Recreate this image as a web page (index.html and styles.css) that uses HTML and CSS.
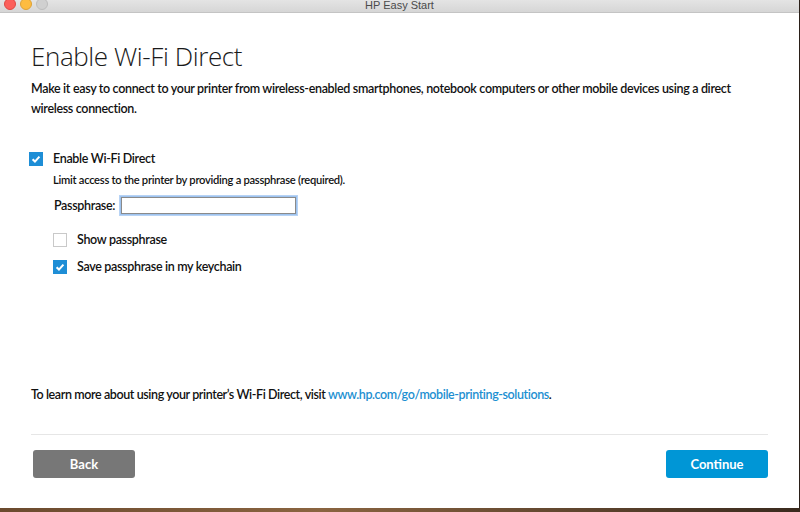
FILE: index.html
```html
<!DOCTYPE html>
<html>
<head>
<meta charset="utf-8">
<link rel="stylesheet" href="styles.css">
</head>
<body>
<div class="window">
  <div class="titlebar">
    <div class="lights">
      <span class="light red"></span>
      <span class="light yellow"></span>
      <span class="light gray"></span>
    </div>
    <div class="title">HP Easy Start</div>
  </div>
  <div class="content">
    <h1 class="heading">Enable Wi-Fi Direct</h1>
    <p class="intro">Make it easy to connect to your printer from wireless-enabled smartphones, notebook computers or other mobile devices using a direct wireless connection.</p>

    <div class="row main-check">
      <span class="box checked"><svg viewBox="0 0 14 14"><path d="M3 7.2 L5.8 10 L11 4.2" fill="none" stroke="#fff" stroke-width="2.4"/></svg></span>
      <span class="label">Enable Wi-Fi Direct</span>
    </div>
    <div class="sub">
      <div class="hint">Limit access to the printer by providing a passphrase (required).</div>
      <div class="pass-row">
        <span class="label">Passphrase:</span>
        <span class="input"></span>
      </div>
      <div class="row opt">
        <span class="box"></span>
        <span class="label">Show passphrase</span>
      </div>
      <div class="row opt">
        <span class="box checked"><svg viewBox="0 0 14 14"><path d="M3 7.2 L5.8 10 L11 4.2" fill="none" stroke="#fff" stroke-width="2.4"/></svg></span>
        <span class="label">Save passphrase in my keychain</span>
      </div>
    </div>

    <div class="spacer"></div>
    <p class="more">To learn more about using your printer’s Wi-Fi Direct, visit <a class="link">www.hp.com/go/mobile-printing-solutions</a>.</p>
    <div class="footer">
      <button class="btn back">Back</button>
      <button class="btn continue">Continue</button>
    </div>
  </div>
</div>
<div class="desk"></div>
</body>
</html>
```
FILE: styles.css
```css
html, body {
  margin: 0;
  padding: 0;
  width: 800px;
  height: 512px;
  overflow: hidden;
  background: #2a1f18;
  font-family: "Lato", "Liberation Sans", sans-serif;
}
.window {
  width: 799px;
  height: 508px;
  background: #fff;
  display: flex;
  flex-direction: column;
}
.desk {
  height: 4px;
  background: linear-gradient(90deg, #6b4a2e, #8a6440 40%, #3a2a1e);
}
.titlebar {
  height: 12px;
  position: relative;
  background: linear-gradient(#e4e4e4, #d6d6d6);
  border-bottom: 1px solid #c4c4c4;
  flex: none;
  overflow: hidden;
}
.lights {
  position: absolute;
  left: 4px;
  top: -2px;
  display: flex;
  gap: 4px;
}
.light {
  width: 12px;
  height: 12px;
  border-radius: 50%;
  display: block;
  box-sizing: border-box;
}
.red { background: #fc605b; border: 0.5px solid #de4a44; }
.yellow { background: #fdbc40; border: 0.5px solid #dea236; }
.gray { background: #d0d0d0; border: 0.5px solid #bdbdbd; }
.title {
  text-align: center;
  font-family: "Liberation Sans", sans-serif;
  font-size: 11px;
  line-height: 12px;
  color: #4a4a4a;
  margin-top: -1px;
}
.content {
  flex: 1;
  display: flex;
  flex-direction: column;
  padding: 0 31px 0 31px;
}
.heading {
  margin: 27px 0 0 0;
  font-family: "Open Sans", sans-serif;
  font-weight: 300;
  font-size: 26px;
  line-height: 32px;
  color: #1a1a1a;
  letter-spacing: -0.4px;
}
.intro {
  margin: 7px 0 0 0;
  font-size: 12.5px;
  line-height: 20px;
  font-weight: 600;
  color: #111;
  letter-spacing: -0.33px;
}
.row {
  display: flex;
  align-items: center;
}
.main-check {
  margin-top: 32px;
  margin-left: -2px;
}
.box {
  width: 14px;
  height: 14px;
  box-sizing: border-box;
  border: 1px solid #c9c9c9;
  background: #fff;
  display: inline-flex;
  flex: none;
}
.box.checked {
  background: #1e8ed6;
  border-color: #1e8ed6;
}
.box svg { width: 100%; height: 100%; }
.label {
  font-size: 12.5px;
  font-weight: 600;
  color: #111;
  letter-spacing: -0.33px;
}
.row .label { margin-left: 10px; }
.sub {
  margin-left: 22px;
}
.hint {
  margin-top: 6px;
  font-size: 11.2px;
  font-weight: 600;
  color: #111;
  letter-spacing: -0.28px;
  line-height: 16px;
}
.pass-row {
  display: flex;
  align-items: center;
  margin-top: 8px;
}
.pass-row .label { margin-left: 1px; }
.input {
  margin-left: 5px;
  width: 177px;
  height: 19px;
  box-sizing: border-box;
  border: 1px solid #9ec3ef;
  box-shadow: inset 0 0 0 1px #8a8a8a, 0 0 0 1px #b7d3f5;
  background: #fff;
}
.opt { margin-top: 17px; }
.opt + .opt { margin-top: 12px; }
.spacer { flex: 1; }
.more {
  margin: 0 0 32px 0;
  font-size: 12.5px;
  font-weight: 600;
  color: #111;
  letter-spacing: -0.4px;
}
.link { color: #1d8fd1; }
.footer {
  border-top: 1px solid #e6e6e6;
  display: flex;
  justify-content: space-between;
  padding: 15px 0 30px 2px;
}
.btn {
  width: 102px;
  height: 28px;
  border: none;
  border-radius: 3px;
  color: #fff;
  font-family: "Lato", sans-serif;
  font-size: 13px;
  font-weight: 700;
}
.back { background: #777777; }
.continue { background: #0096d6; }
```
